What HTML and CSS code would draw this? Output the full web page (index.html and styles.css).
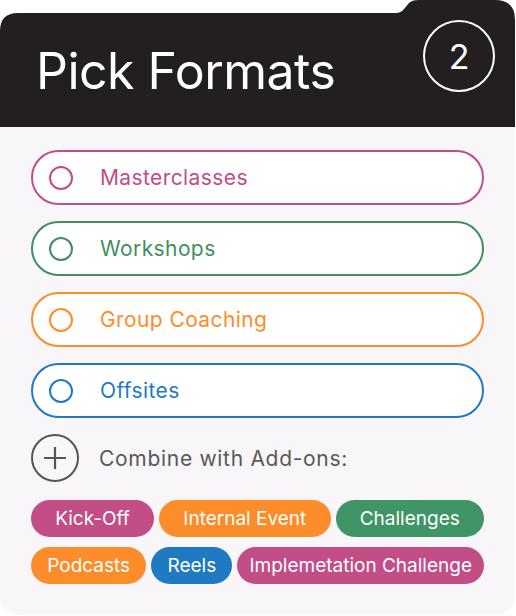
FILE: index.html
```html
<!DOCTYPE html>
<html lang="en">
<head>
    <meta charset="UTF-8">
    <meta name="viewport" content="width=device-width, initial-scale=1.0">
    <title>Pick Formats</title>
    <link rel="stylesheet" href="styles.css">
</head>
<body>

<div class="card">
    <!-- Dark header with folder tab -->
    <div class="card-header">
        <svg class="header-shape" width="515" height="127" viewBox="0 0 515 127">
            <path d="M0,31 Q0,13 18,13 L396,13 Q401,13 404,9 L409,3 Q412,0 418,0 L495,0 Q515,0 515,20 L515,127 L0,127 Z" fill="#231f20"/>
        </svg>
        <h1 class="title">Pick Formats</h1>
        <div class="step">2</div>
    </div>

    <div class="card-body">
        <!-- Format options -->
        <div class="option pink"><span class="radio"></span>Masterclasses</div>
        <div class="option green"><span class="radio"></span>Workshops</div>
        <div class="option orange"><span class="radio"></span>Group Coaching</div>
        <div class="option blue"><span class="radio"></span>Offsites</div>

        <div class="addons-head">
            <span class="plus">
                <svg width="24" height="24" viewBox="0 0 24 24">
                    <path d="M12 1 V23 M1 12 H23" stroke="#555" stroke-width="2.2" fill="none"/>
                </svg>
            </span>
            Combine with Add-ons:
        </div>

        <div class="chips">
            <div class="chip-row">
                <span class="chip pink">Kick-Off</span>
                <span class="chip orange">Internal Event</span>
                <span class="chip green">Challenges</span>
            </div>
            <div class="chip-row">
                <span class="chip orange">Podcasts</span>
                <span class="chip blue">Reels</span>
                <span class="chip pink fixed">Implemetation Challenge</span>
            </div>
        </div>
    </div>
</div>

</body>
</html>
```

FILE: styles.css
```css
/* Page */
body {
    margin: 0;
    background: #fff;
    font-family: Inter, "Noto Sans", sans-serif;
}

.card {
    width: 515px;
}

/* Header */
.card-header {
    position: relative;
    height: 127px;
    display: flex;
    align-items: center;
    justify-content: space-between;
    padding: 13px 20px 0 36px;
    box-sizing: border-box;
}

.header-shape {
    position: absolute;
    top: 0;
    left: 0;
}

.title {
    position: relative;
    margin: 0;
    color: #fff;
    font-size: 50px;
    font-weight: 400;
    letter-spacing: -0.5px;
    margin-top: 2px;
}

.step {
    position: relative;
    width: 68px;
    height: 68px;
    border: 2px solid #fff;
    border-radius: 50%;
    color: #fff;
    font-size: 34px;
    display: flex;
    align-items: center;
    justify-content: center;
    margin-top: -28px;
}

/* Body */
.card-body {
    background: #f8f6f9;
    border-radius: 0 0 20px 20px;
    padding: 23px 31px 31px 31px;
    height: 488px;
    box-sizing: border-box;
}

.option {
    height: 55px;
    box-sizing: border-box;
    border: 2px solid;
    border-radius: 28px;
    background: #fff;
    display: flex;
    align-items: center;
    padding-left: 16px;
    font-size: 21px;
    letter-spacing: 0.4px;
    margin-bottom: 16px;
}

.radio {
    width: 24px;
    height: 24px;
    box-sizing: border-box;
    border: 2px solid;
    border-radius: 50%;
    margin-right: 27px;
}

.option.pink { color: #c24d87; border-color: #c24d87; }
.option.green { color: #3f8f60; border-color: #3f8f60; }
.option.orange { color: #fd8c2b; border-color: #fd8c2b; }
.option.blue { color: #1f7ac3; border-color: #1f7ac3; }

/* Add-ons */
.addons-head {
    display: flex;
    align-items: center;
    color: #595959;
    font-size: 21px;
    letter-spacing: 0.7px;
    margin-bottom: 18px;
}

.plus {
    width: 48px;
    height: 48px;
    box-sizing: border-box;
    border: 2px solid #555;
    border-radius: 50%;
    display: flex;
    align-items: center;
    justify-content: center;
    margin-right: 20px;
}

.chips {
    display: flex;
    flex-direction: column;
    gap: 10px;
}

.chip-row {
    display: flex;
    gap: 5px;
}

.chip {
    flex: 1 1 auto;
    height: 37px;
    border-radius: 19px;
    color: #fff;
    font-size: 19px;
    display: flex;
    align-items: center;
    justify-content: center;
    padding: 0 12px;
    white-space: nowrap;
}

.chip.fixed {
    flex-grow: 0;
}

.chip.pink { background: #c24d87; }
.chip.green { background: #3f9565; }
.chip.orange { background: #fd8c2b; }
.chip.blue { background: #1f7ac3; }
```
